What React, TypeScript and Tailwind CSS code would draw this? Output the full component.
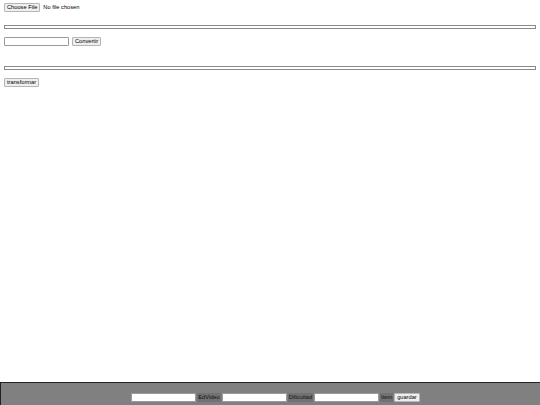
export default function App() {
  const font = { fontFamily: '"Liberation Sans", Arial, sans-serif' }
  return (
    <div className="flex min-h-screen flex-col bg-white text-black" style={font}>
      <div className="flex flex-col px-[4px] pt-[3px]">
        {/* file picker */}
        <div className="flex items-center gap-[3px] text-[5.7px]">
          <button className="h-[9px] rounded-[1px] border border-[#b5b5b5] bg-[#efefef] px-[2px] text-[5.7px] leading-none">
            Choose File
          </button>
          <span>No file chosen</span>
        </div>

        <div className="mt-[13px] h-[4px] w-full border border-[#8a8a8a]" />

        <div className="mt-[8px] flex items-center gap-[3px]">
          <input className="h-[9px] w-[65px] rounded-[1px] border border-[#9a9a9a] bg-white text-[5.7px]" />
          <button className="h-[9px] rounded-[1px] border border-[#b5b5b5] bg-[#efefef] px-[2px] text-[5.7px] leading-none">
            Convertir
          </button>
        </div>

        <div className="mt-[20px] h-[4px] w-full border border-[#8a8a8a]" />

        <div className="mt-[8px] flex">
          <button className="h-[9px] rounded-[1px] border border-[#b5b5b5] bg-[#efefef] px-[2px] text-[5.7px] leading-none">
            transformar
          </button>
        </div>
      </div>

      {/* bottom bar */}
      <div className="mt-auto flex h-[23px] items-start justify-center gap-[1px] border-l border-t border-[#222] bg-[#808080] pt-[10px] pl-[10px] text-[5.7px]">
        <input className="h-[9px] w-[65px] border border-[#9a9a9a] bg-white" />
        <span className="bg-[#727272] px-[1px] leading-[9px] text-[#111]">EdVideo</span>
        <input className="h-[9px] w-[65px] border border-[#9a9a9a] bg-white" />
        <span className="bg-[#727272] px-[1px] leading-[9px] text-[#111]">Dificultad</span>
        <input className="h-[9px] w-[65px] border border-[#9a9a9a] bg-white" />
        <span className="bg-[#727272] px-[1px] leading-[9px] text-[#111]">Item</span>
        <button className="h-[9px] rounded-[1px] border border-[#b5b5b5] bg-[#efefef] px-[2px] text-[5.7px] leading-none">
          guardar
        </button>
      </div>
    </div>
  )
}
